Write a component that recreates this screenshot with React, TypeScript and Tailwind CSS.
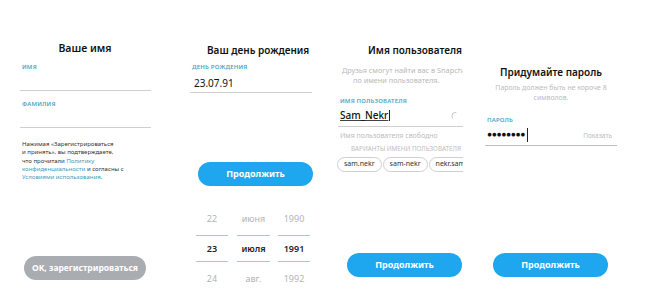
import type { ReactNode } from 'react';

const font = { fontFamily: '"Noto Sans", "Open Sans", Arial, sans-serif' };

function Label({ children }: { children: ReactNode }) {
  return (
    <div className="text-[6px] leading-[8px] font-semibold tracking-[0.2px] text-[#4ba4c2]">
      {children}
    </div>
  );
}

function BlueButton() {
  return (
    <div className="flex h-[24px] w-[115px] items-center justify-center rounded-full bg-[#1ea6ee] text-[9px] font-bold text-white">
      Продолжить
    </div>
  );
}

/** 1: имя и фамилия */
function NameStep() {
  return (
    <div className="flex h-[308px] w-[170px] shrink-0 flex-col pt-[41px]">
      <div className="text-center text-[10.5px] leading-[14px] font-semibold text-[#111]">
        Ваше имя
      </div>
      <div className="mt-[8px] pl-[22px]">
        <Label>ИМЯ</Label>
      </div>
      <div className="ml-[20px] h-[20px] w-[131px] border-b border-[#cfcfcf]" />
      <div className="mt-[9px] pl-[22px]">
        <Label>ФАМИЛИЯ</Label>
      </div>
      <div className="ml-[20px] h-[20px] w-[131px] border-b border-[#cfcfcf]" />
      <p className="mt-[12px] pl-[22px] text-[6px] leading-[8.3px] text-[#333]">
        Нажимая «Зарегистрироваться
        <br />и принять», вы подтверждаете,
        <br />
        что прочитали <span className="text-[#3d9dbd]">Политику</span>
        <br />
        <span className="text-[#3d9dbd]">конфиденциальности</span> и согласны с
        <br />
        <span className="text-[#3d9dbd]">Условиями использования</span>.
      </p>
      <div className="mt-auto mb-[28px] ml-[24px] flex h-[24px] w-[122px] items-center justify-center rounded-full bg-[#a9adb1] text-[8.5px] font-bold text-white">
        OK, зарегистрироваться
      </div>
    </div>
  );
}

function PickerRow({ cells, active }: { cells: string[]; active?: boolean }) {
  return (
    <div
      className={`flex h-[18px] items-center text-[9px] ${
        active ? 'font-semibold text-[#222]' : 'text-[#b3b3b3]'
      }`}
    >
      <div className="w-[32px] text-center">{cells[0]}</div>
      <div className="ml-[9px] w-[33px] text-center">{cells[1]}</div>
      <div className="ml-[8px] w-[32px] text-center">{cells[2]}</div>
    </div>
  );
}

function PickerLines() {
  return (
    <div className="flex">
      <div className="h-px w-[32px] bg-[#a9c8d0]" />
      <div className="ml-[9px] h-px w-[33px] bg-[#a9c8d0]" />
      <div className="ml-[8px] h-px w-[32px] bg-[#a9c8d0]" />
    </div>
  );
}

/** 2: день рождения */
function BirthdayStep() {
  return (
    <div className="flex h-[308px] w-[155px] shrink-0 flex-col pt-[43px]">
      <div className="pl-[37px] text-[10px] leading-[14px] font-semibold whitespace-nowrap text-[#111]">
        Ваш день рождения
      </div>
      <div className="mt-[6px] pl-[22px]">
        <Label>ДЕНЬ РОЖДЕНИЯ</Label>
      </div>
      <div className="ml-[20px] w-[122px] border-b border-[#cfcfcf] pt-[6px] pb-[2px] pl-[4px] text-[10px] leading-[13px] text-[#111]">
        23.07.91
      </div>
      <div className="mt-[69px] ml-[28px]">
        <BlueButton />
      </div>
      <div className="mt-[24px] ml-[26px] flex flex-col">
        <PickerRow cells={['22', 'июня', '1990']} />
        <div className="h-[7px]" />
        <PickerLines />
        <div className="h-[4px]" />
        <PickerRow cells={['23', 'июля', '1991']} active />
        <div className="h-[3px]" />
        <PickerLines />
        <div className="h-[8px]" />
        <PickerRow cells={['24', 'авг.', '1992']} />
      </div>
    </div>
  );
}

function Chip({ children }: { children: ReactNode }) {
  return (
    <div className="flex h-[15px] shrink-0 items-center rounded-full border border-[#cfcfcf] px-[6px] text-[7px] whitespace-nowrap text-[#333]">
      {children}
    </div>
  );
}

/** 3: имя пользователя (снимок обрезан справа) */
function UsernameStep() {
  return (
    <div className="flex h-[308px] w-[155px] shrink-0">
      <div className="flex w-[138px] flex-col overflow-hidden pt-[43px]">
        <div className="pl-[43px] text-[10px] leading-[14px] font-semibold whitespace-nowrap text-[#111]">
          Имя пользователя
        </div>
        <div className="mt-[8px] pl-[17px] text-[7.3px] leading-[10px] whitespace-nowrap text-[#b8b8b8]">
          Друзья смогут найти вас в Snapchat
        </div>
        <div className="pl-[28px] text-[7.3px] leading-[10px] whitespace-nowrap text-[#b8b8b8]">
          по имени пользователя.
        </div>
        <div className="mt-[12px] pl-[15px]">
          <Label>ИМЯ ПОЛЬЗОВАТЕЛЯ</Label>
        </div>
        <div className="ml-[13px] flex h-[22px] items-center border-b border-[#cfcfcf] pr-[4px]">
          <span className="ml-[2px] text-[10px] font-medium text-[#111] underline decoration-[#444]">
            Sam_Nekr
          </span>
          <span className="ml-px h-[11px] w-px bg-[#222]" />
          <svg className="ml-auto" width="9" height="9" viewBox="0 0 10 10">
            <path d="M7 1.8A4 4 0 0 0 3 8.2" fill="none" stroke="#c8c8c8" strokeWidth="1.2" />
          </svg>
        </div>
        <div className="mt-[4px] pl-[15px] text-[7px] leading-[9px] text-[#bdbdbd]">
          Имя пользователя свободно
        </div>
        <div className="mt-[5px] pl-[26px] text-[6.3px] leading-[8px] whitespace-nowrap text-[#bdbdbd]">
          ВАРИАНТЫ ИМЕНИ ПОЛЬЗОВАТЕЛЯ
        </div>
        <div className="mt-[4px] ml-[12px] flex gap-px">
          <Chip>sam.nekr</Chip>
          <Chip>sam-nekr</Chip>
          <Chip>nekr.sam</Chip>
        </div>
        <div className="mt-auto mb-[31px] ml-[22px]">
          <BlueButton />
        </div>
      </div>
    </div>
  );
}

/** 4: пароль */
function PasswordStep() {
  return (
    <div className="flex h-[308px] w-[170px] shrink-0 flex-col pt-[65px]">
      <div className="w-[142px] text-center text-[10px] leading-[14px] font-semibold text-[#111]">
        Придумайте пароль
      </div>
      <div className="mt-[4px] w-[142px] text-center text-[6.9px] leading-[10px] text-[#bcbcbc]">
        Пароль должен быть не короче 8
        <br />
        символов.
      </div>
      <div className="mt-[13px] pl-[7px]">
        <Label>ПАРОЛЬ</Label>
      </div>
      <div className="ml-[5px] flex h-[22px] w-[132px] items-center border-b border-[#bdbdbd] pl-[2px]">
        <span className="text-[8.5px] font-bold tracking-[-0.4px] text-[#111]">●●●●●●●●</span>
        <span className="ml-[2px] h-[14px] w-px bg-[#222]" />
        <span className="mt-[3px] ml-auto mr-[5px] text-[6.5px] text-[#bdbdbd]">Показать</span>
      </div>
      <div className="mt-auto mb-[31px] ml-[13px]">
        <BlueButton />
      </div>
    </div>
  );
}

export default function App() {
  return (
    <div className="flex h-[308px] w-[650px] overflow-hidden bg-white" style={font}>
      <NameStep />
      <BirthdayStep />
      <UsernameStep />
      <PasswordStep />
    </div>
  );
}
